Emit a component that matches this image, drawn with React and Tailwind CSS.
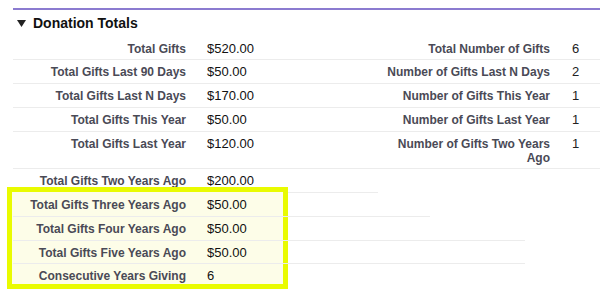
const font = { fontFamily: '"Liberation Sans", Arial, sans-serif' }

const topRows = [
  ['Total Gifts', '$520.00', 'Total Number of Gifts', '6'],
  ['Total Gifts Last 90 Days', '$50.00', 'Number of Gifts Last N Days', '2'],
  ['Total Gifts Last N Days', '$170.00', 'Number of Gifts This Year', '1'],
  ['Total Gifts This Year', '$50.00', 'Number of Gifts Last Year', '1'],
  ['Total Gifts Last Year', '$120.00', 'Number of Gifts Two Years Ago', '1'],
]

function Row({ label, value, rightLabel, rightValue, line = 'w-full' }) {
  return (
    <div className={`relative flex items-start border-b border-[#ececec] pt-[5px] pb-[3.75px] ${line}`}>
      <div className="w-[179px] shrink-0 pr-[6px] text-right text-[12px] font-bold leading-[14px] text-[#4a4a56]">
        {label}
      </div>
      <div className="w-[188px] shrink-0 pl-[15px] text-[13px] leading-[14px] text-[#111]">{value}</div>
      {rightLabel !== undefined && (
        <>
          <div className="w-[176px] shrink-0 pr-[6px] text-right text-[12px] font-bold leading-[14px] text-[#4a4a56]">
            {rightLabel}
          </div>
          <div className="pl-[16px] text-[13px] leading-[14px] text-[#222]">{rightValue}</div>
        </>
      )}
    </div>
  )
}

export default function App() {
  return (
    <div className="w-[600px] h-[300px] overflow-hidden bg-white pl-[13px]" style={font}>
      {/* Section header */}
      <div className="mt-[8px] border-t-2 border-[#8b7bd0]">
        <div className="flex h-[26.5px] items-start pt-[5px]">
          <svg width="9" height="7" viewBox="0 0 9 7" className="ml-[4px] mt-[5px]">
            <path d="M0 0 H9 L4.5 7 Z" fill="#222" />
          </svg>
          <h3 className="ml-[7px] text-[14px] font-bold leading-[16px] text-[#111]">Donation Totals</h3>
        </div>
      </div>

      {topRows.map(([l, v, rl, rv]) => (
        <Row key={l} label={l} value={v} rightLabel={rl} rightValue={rv} />
      ))}

      <Row label="Total Gifts Two Years Ago" value="$200.00" line="w-[365px]" />

      {/* Highlighted group */}
      <div className="relative">
        <div className="absolute -left-[6px] -top-[6px] -bottom-[1px] w-[281px] border-[5px] border-[#e9fb00] bg-[#fdfde8]" />
        <Row label="Total Gifts Three Years Ago" value="$50.00" line="w-[417px]" />
        <Row label="Total Gifts Four Years Ago" value="$50.00" line="w-[512px]" />
        <Row label="Total Gifts Five Years Ago" value="$50.00" line="w-[512px]" />
        <Row label="Consecutive Years Giving" value="6" line="w-[512px] border-transparent" />
      </div>
    </div>
  )
}
